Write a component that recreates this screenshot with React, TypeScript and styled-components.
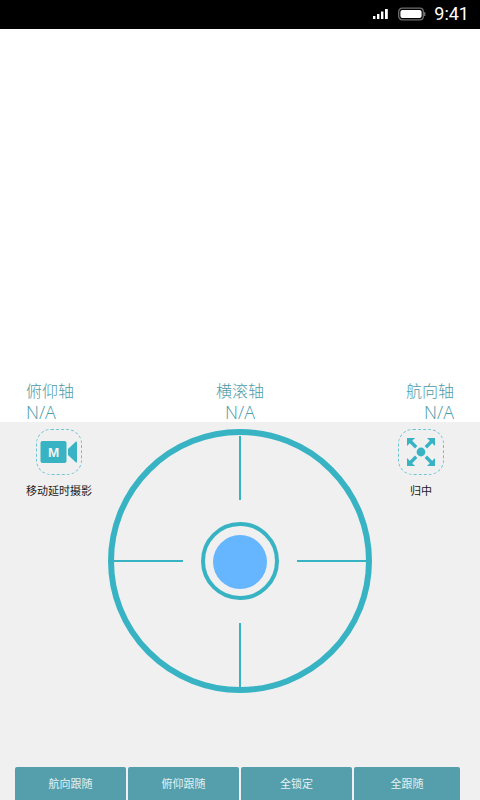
import React from "react";
import styled, { createGlobalStyle } from "styled-components";

const TEAL = "#38b3c4";

const Global = createGlobalStyle`
  html, body { margin: 0; padding: 0; height: 100%; background: #fff; }
  #root { height: 100%; }
  * { box-sizing: border-box; }
`;

const Page = styled.div`
  width: 480px;
  height: 800px;
  display: flex;
  flex-direction: column;
  overflow: hidden;
  font-family: "Noto Sans CJK SC", "Noto Sans", sans-serif;
`;

const StatusBar = styled.div`
  height: 29px;
  background: #000;
  display: flex;
  align-items: center;
  justify-content: flex-end;
  padding: 0 11px 2px 0;
  color: #fff;
  flex: none;
`;

const Clock = styled.span`
  font-family: Roboto, sans-serif;
  font-size: 18px;
  line-height: 27px;
  margin-left: 8px;
`;

const Signal = styled.svg`
  width: 17px;
  height: 10px;
  margin-right: 8px;
`;

const Battery = styled.svg`
  width: 28px;
  height: 14px;
`;

const Preview = styled.div`
  height: 393px;
  flex: none;
  background: #fff;
  display: flex;
  align-items: flex-end;
  justify-content: space-between;
  padding: 0 26px 1px;
`;

const Axis = styled.div<{ $align: string }>`
  display: flex;
  flex-direction: column;
  align-items: ${(p) => p.$align};
  color: #4b9ba8;
  gap: 2px;
`;

const AxisName = styled.span`
  font-size: 16px;
  line-height: 22px;
  font-weight: 300;
`;

const AxisValue = styled.span`
  font-family: "Open Sans", sans-serif;
  font-size: 18px;
  line-height: 18px;
  font-weight: 300;
`;

const Panel = styled.div`
  flex: 1;
  background: #f0f0f0;
  display: flex;
  flex-direction: column;
`;

const Controls = styled.div`
  flex: 1;
  display: grid;
  grid-template-columns: 108px 264px 108px;
  padding-top: 7px;
  align-items: start;
`;

const ActionSlot = styled.div<{ $side: "left" | "right" }>`
  display: flex;
  justify-content: ${(p) => (p.$side === "left" ? "flex-start" : "flex-end")};
  padding: ${(p) => (p.$side === "left" ? "0 0 0 26px" : "0 26px 0 0")};
`;

const Action = styled.button`
  width: 66px;
  border: 0;
  padding: 0;
  background: none;
  display: flex;
  flex-direction: column;
  align-items: center;
  font-family: inherit;
`;

const IconFrame = styled.div`
  width: 46px;
  height: 46px;
  border: 1px dashed #6cc6d0;
  border-radius: 15px;
  display: flex;
  align-items: center;
  justify-content: center;
`;

const ActionLabel = styled.span`
  margin-top: 7px;
  font-size: 11px;
  line-height: 16px;
  color: #1a1a1a;
  white-space: nowrap;
`;

const Dial = styled.svg`
  width: 264px;
  height: 264px;
  display: block;
`;

const ButtonBar = styled.div`
  height: 33px;
  flex: none;
  display: grid;
  grid-template-columns: 111px 111px 111px 106px;
  gap: 2px;
  padding-left: 15px;
`;

const ModeButton = styled.button`
  border: 0;
  padding: 0 0 2px;
  background: #549fab;
  border-radius: 2px 2px 0 0;
  color: #e4f1f3;
  font-family: inherit;
  font-size: 11px;
`;

const modes = ["航向跟随", "俯仰跟随", "全锁定", "全跟随"];

export default function App() {
  return (
    <Page>
      <Global />
      <StatusBar>
        <Signal viewBox="0 0 17 10">
          <rect x="0" y="7" width="2.4" height="3" fill="#fff" />
          <rect x="4" y="5" width="2.4" height="5" fill="#fff" />
          <rect x="8" y="2.5" width="2.4" height="7.5" fill="#fff" />
          <rect x="12" y="0" width="2.8" height="10" fill="#fff" />
        </Signal>
        <Battery viewBox="0 0 28 14">
          <rect x="0.7" y="1.2" width="24.6" height="11.6" rx="3.4" fill="none" stroke="#6f6f6f" strokeWidth="1.3" />
          <rect x="2.4" y="2.9" width="21.2" height="8.2" rx="2" fill="#fff" />
          <rect x="26" y="5" width="1.4" height="4" rx="0.6" fill="#6f6f6f" />
        </Battery>
        <Clock>9:41</Clock>
      </StatusBar>
      <Preview>
        <Axis $align="flex-start">
          <AxisName>俯仰轴</AxisName>
          <AxisValue>N/A</AxisValue>
        </Axis>
        <Axis $align="center">
          <AxisName>横滚轴</AxisName>
          <AxisValue>N/A</AxisValue>
        </Axis>
        <Axis $align="flex-end">
          <AxisName>航向轴</AxisName>
          <AxisValue>N/A</AxisValue>
        </Axis>
      </Preview>
      <Panel>
        <Controls>
          <ActionSlot $side="left">
            <Action>
              <IconFrame>
                <svg width="38" height="24" viewBox="0 0 38 24">
                  <rect x="0.5" y="1" width="26" height="22" rx="2" fill={TEAL} />
                  <path d="M28 9 L36 1.5 Q37 1 37 2.5 V21.5 Q37 23 36 22.5 L28 15 Z" fill={TEAL} />
                  <text x="13.5" y="17" textAnchor="middle" fontFamily="Liberation Sans, sans-serif" fontSize="13.5" fontWeight="700" fill="#f2f2f2">M</text>
                </svg>
              </IconFrame>
              <ActionLabel>移动延时摄影</ActionLabel>
            </Action>
          </ActionSlot>
          <Dial viewBox="0 0 264 264">
            <circle cx="132" cy="132" r="129" fill="none" stroke={TEAL} strokeWidth="6" />
            <g stroke={TEAL} strokeWidth="2">
              <line x1="132" y1="7" x2="132" y2="71" />
              <line x1="132" y1="194" x2="132" y2="259" />
              <line x1="6" y1="132" x2="75" y2="132" />
              <line x1="189" y1="132" x2="259" y2="132" />
            </g>
            <circle cx="132" cy="132" r="37" fill="none" stroke={TEAL} strokeWidth="4" />
            <circle cx="132" cy="133" r="27" fill="#66b5ff" />
          </Dial>
          <ActionSlot $side="right">
            <Action>
              <IconFrame>
                <svg width="30" height="30" viewBox="0 0 30 30" fill={TEAL}>
                  <circle cx="15" cy="15" r="4.4" />
                  <g stroke={TEAL} strokeWidth="3.4">
                    <line x1="4" y1="4" x2="10.2" y2="10.2" />
                    <line x1="26" y1="4" x2="19.8" y2="10.2" />
                    <line x1="4" y1="26" x2="10.2" y2="19.8" />
                    <line x1="26" y1="26" x2="19.8" y2="19.8" />
                  </g>
                  <path d="M1 1 H9 L1 9 Z M29 1 H21 L29 9 Z M1 29 H9 L1 21 Z M29 29 H21 L29 21 Z" />
                </svg>
              </IconFrame>
              <ActionLabel>归中</ActionLabel>
            </Action>
          </ActionSlot>
        </Controls>
        <ButtonBar>
          {modes.map((m) => (
            <ModeButton key={m}>{m}</ModeButton>
          ))}
        </ButtonBar>
      </Panel>
    </Page>
  );
}
